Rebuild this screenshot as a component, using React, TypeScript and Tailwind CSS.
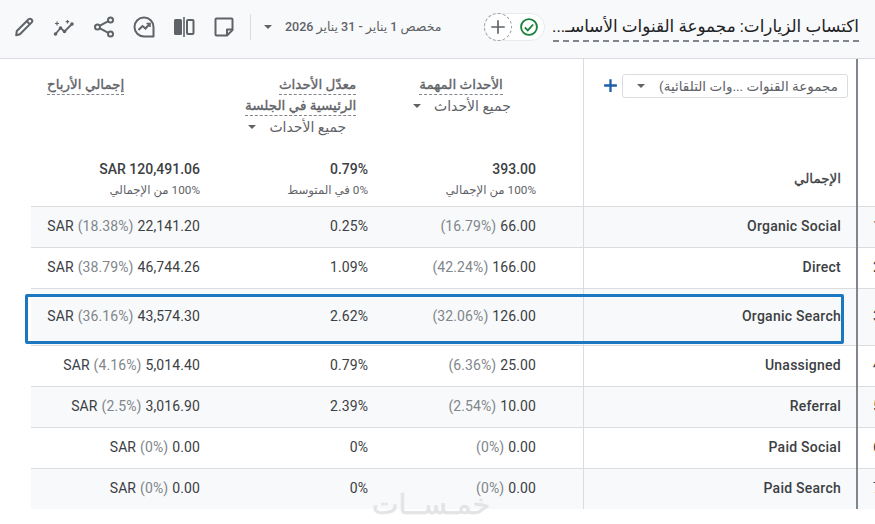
/**
 * Traffic acquisition report: toolbar and channel table.
 */

import type { ReactNode } from "react";

const GRID = "grid grid-cols-[31px_185px_168px_199px_273px_2px_17px]";

const rows = [
  { rank: "1", name: "Organic Social", events: "66.00", eventsPct: "(16.79%)", rate: "0.25%", revenue: "22,141.20", revenuePct: "(18.38%)", shaded: true, tall: false },
  { rank: "2", name: "Direct", events: "166.00", eventsPct: "(42.24%)", rate: "1.09%", revenue: "46,744.26", revenuePct: "(38.79%)", shaded: false, tall: false },
  { rank: "3", name: "Organic Search", events: "126.00", eventsPct: "(32.06%)", rate: "2.62%", revenue: "43,574.30", revenuePct: "(36.16%)", shaded: true, tall: true },
  { rank: "4", name: "Unassigned", events: "25.00", eventsPct: "(6.36%)", rate: "0.79%", revenue: "5,014.40", revenuePct: "(4.16%)", shaded: false, tall: false },
  { rank: "5", name: "Referral", events: "10.00", eventsPct: "(2.54%)", rate: "2.39%", revenue: "3,016.90", revenuePct: "(2.5%)", shaded: true, tall: false },
  { rank: "6", name: "Paid Social", events: "0.00", eventsPct: "(0%)", rate: "0%", revenue: "0.00", revenuePct: "(0%)", shaded: false, tall: false },
  { rank: "7", name: "Paid Search", events: "0.00", eventsPct: "(0%)", rate: "0%", revenue: "0.00", revenuePct: "(0%)", shaded: true, tall: false },
];

function ToolIcon({ children }: { children: ReactNode }) {
  return (
    <svg viewBox="0 0 24 24" className="size-6 shrink-0 text-[#5f6368]" fill="none" stroke="currentColor" strokeWidth="2">
      {children}
    </svg>
  );
}

function Caret({ className }: { className?: string }) {
  return <span className={`inline-block size-0 border-x-[4px] border-t-[4px] border-x-transparent border-t-[#5f6368] ${className ?? ""}`} />;
}

function Toolbar() {
  return (
    <header className="flex h-[59px] items-center border-b border-[#dadce0] bg-[#f8f9fa] pr-[16px] pl-[12px] pb-[4px]">
      <div className="flex items-center gap-[16px]">
        <ToolIcon>
          <path d="M4.200 20.200 4.800 16 16.600 4.300a2.200 2.200 0 0 1 3.100 3.100L7.900 19.300z" strokeLinejoin="round" />
          <path d="M14.800 6.200 17.800 9.200" />
        </ToolIcon>
        <ToolIcon>
          <path d="M3.500 19 8.500 13l4 3.500L20 9" strokeWidth="1.800" />
          <circle cx="3.500" cy="19" r="1.800" fill="currentColor" stroke="none" />
          <circle cx="8.500" cy="13" r="1.800" fill="currentColor" stroke="none" />
          <circle cx="12.500" cy="16.500" r="1.800" fill="currentColor" stroke="none" />
          <circle cx="20" cy="9" r="1.800" fill="currentColor" stroke="none" />
          <path d="M5 6.500v4M3 8.500h4M15.500 5v3.500M13.800 6.700h3.400" strokeWidth="1.200" />
        </ToolIcon>
        <ToolIcon>
          <circle cx="18.500" cy="5" r="2.500" />
          <circle cx="5.500" cy="12" r="2.500" />
          <circle cx="18.500" cy="19" r="2.500" />
          <path d="M8 10.700 16.300 6.200M8 13.300l8.300 4.500" />
        </ToolIcon>
        <ToolIcon>
          <path d="M21.500 21.500H12a9.500 9.500 0 1 1 9.500-9.500z" strokeLinejoin="round" />
          <path d="M6.500 15 10.500 11l3 2.500L17.500 9" />
          <path d="M14.500 8.500h3.500V12" strokeWidth="1.600" />
        </ToolIcon>
        <ToolIcon>
          <rect x="2" y="4" width="8" height="16" rx="1.500" fill="currentColor" stroke="none" />
          <path d="M12 2v20" strokeWidth="1.600" />
          <rect x="15" y="5" width="6.500" height="14" rx="1" />
        </ToolIcon>
        <ToolIcon>
          <path d="M3.500 4.500a1 1 0 0 1 1-1h15a1 1 0 0 1 1 1V15l-5.500 5.500H4.500a1 1 0 0 1-1-1z" strokeLinejoin="round" />
          <path d="M20.500 14.500H15v6" strokeLinejoin="round" />
        </ToolIcon>
      </div>
      <div className="mr-[13px] ml-[14px] h-[26px] w-px bg-[#dadce0]" />
      <Caret />
      <span dir="rtl" className="ml-[13px] text-[12.5px] font-medium whitespace-nowrap text-[#5f6368]">
        مخصص 1 يناير - 31 يناير 2026
      </span>
      <div className="ml-auto flex items-center">
        <div className="flex h-[28px] w-[61px] shrink-0 items-center justify-between rounded-full border border-[#e8eaed] bg-white pr-[5px]">
          <span className="-ml-px flex size-[28px] items-center justify-center rounded-full border border-dashed border-[#9aa0a6] text-[#5f6368]">
            <svg viewBox="0 0 24 24" className="size-[18px]" fill="none" stroke="currentColor" strokeWidth="2.200">
              <path d="M12 3v18M3 12h18" />
            </svg>
          </span>
          <svg viewBox="0 0 24 24" className="size-[20px] text-[#188038]" fill="none" stroke="currentColor" strokeWidth="2.200">
            <circle cx="12" cy="12" r="9.500" />
            <path d="m7 12.500 3.500 3.500L17 9" />
          </svg>
        </div>
        <h1 dir="rtl" className="ml-[8px] w-[306px] border-b-2 border-dashed border-[#80868b] text-[16.8px] leading-[27px] whitespace-nowrap text-[#202124]">
          اكتساب الزيارات: مجموعة القنوات الأساسـ...
        </h1>
      </div>
    </header>
  );
}

function HeaderTitle({ children }: { children: ReactNode }) {
  return (
    <span className="border-b border-dashed border-[#80868b] text-[13.500px] leading-[19px] font-medium whitespace-nowrap text-[#5f6368] [-webkit-text-stroke:0.35px_#5f6368]">
      {children}
    </span>
  );
}

function TotalCell({ value, note, className }: { value: string; note: string; className?: string }) {
  return (
    <div className={`flex flex-1 flex-col items-end justify-end pb-[7px] ${className ?? "pr-[16px]"}`}>
      <span className="text-[14px] leading-[20px] font-medium text-[#3c4043]">{value}</span>
      <span dir="rtl" className="mt-[2px] text-[11.750px] leading-[18px] text-[#5f6368]">
        {note}
      </span>
    </div>
  );
}

function ValueCell({ value, pct, unit }: { value: string; pct?: string; unit?: string }) {
  return (
    <div dir="ltr" className="flex items-center justify-end gap-[4px] pr-[16px] pb-[2px] text-[14px] tracking-[0.1px] whitespace-nowrap text-[#3c4043]">
      {unit && <span>{unit}</span>}
      {pct && <span className="text-[#80868b]">{pct}</span>}
      <span>{value}</span>
    </div>
  );
}

export default function App() {
  return (
    <div className="relative h-[524px] w-[875px] overflow-hidden bg-white font-['Roboto','Noto_Sans','DejaVu_Sans',sans-serif]">
      <Toolbar />

      <div className={`${GRID} h-[148px]`}>
        <div />
        <div className="flex flex-col border-b border-[#dadce0]">
          <div className="h-[94px] pt-[16px] pl-[16px]">
            <div dir="rtl" className="flex w-fit">
              <HeaderTitle>إجمالي الأرباح</HeaderTitle>
            </div>
          </div>
          <TotalCell value="SAR 120,491.06" note="100% من الإجمالي" />
        </div>
        <div className="flex flex-col border-b border-[#dadce0]">
          <div className="h-[94px] pt-[16px] pl-[29px]">
            <div dir="rtl" className="flex w-fit flex-col items-start gap-[1px]">
              <HeaderTitle>معدّل الأحداث</HeaderTitle>
              <HeaderTitle>الرئيسية في الجلسة</HeaderTitle>
              <div className="flex items-center gap-[13px] pr-[10px] text-[14px] leading-[20px] text-[#5f6368]">
                <span>جميع الأحداث</span>
                <Caret />
              </div>
            </div>
          </div>
          <TotalCell value="0.79%" note="0% في المتوسط" />
        </div>
        <div className="flex flex-col border-b border-[#dadce0]">
          <div className="h-[94px] pt-[16px] pl-[29px]">
            <div dir="rtl" className="flex w-fit flex-col items-start gap-[1px]">
              <HeaderTitle>الأحداث المهمة</HeaderTitle>
              <div className="-mr-[8px] flex items-center gap-[13px] text-[14px] leading-[20px] text-[#5f6368]">
                <span>جميع الأحداث</span>
                <Caret />
              </div>
            </div>
          </div>
          <TotalCell value="393.00" note="100% من الإجمالي" className="pr-[47px]" />
        </div>
        <div className="flex flex-col border-b border-l border-[#dadce0] pr-[15px]">
          <div className="flex h-[94px] items-start gap-[3px] pt-[15px] pl-[18px]">
            <svg viewBox="0 0 24 24" className="mt-[3px] size-[17px] shrink-0 text-[#1a5fa8]" fill="none" stroke="currentColor" strokeWidth="3.200">
              <path d="M12 3v18M3 12h18" />
            </svg>
            <div className="flex h-[24px] w-[226px] shrink-0 items-center justify-between rounded-[3px] border border-[#dadce0] bg-white pr-[9px] pl-[14px]">
              <Caret />
              <span dir="rtl" className="text-[13.500px] whitespace-nowrap text-[#5f6368]">
                مجموعة القنوات ...وات التلقائية)
              </span>
            </div>
          </div>
          <div dir="rtl" className="pt-[15px] text-[13.500px] leading-[20px] font-medium text-[#3c4043] [-webkit-text-stroke:0.3px_#3c4043]">
            الإجمالي
          </div>
        </div>
        <div className="bg-[#80868b]" />
        <div className="border-b border-[#dadce0]" />
      </div>

      {rows.map((row) => {
        const last = row.rank === "7";
        const line = last ? "" : "border-b border-[#dadce0]";
        const fill = row.shaded ? "bg-[#f8f9fa]" : "bg-white";
        return (
          <div key={row.rank} className={`${GRID} ${row.tall ? "h-[57px]" : last ? "h-[40px]" : "h-[41px]"}`}>
            <div />
            <div className={`col-span-3 grid grid-cols-[185px_168px_199px] ${line} ${fill}`}>
              <ValueCell value={row.revenue} pct={row.revenuePct} unit="SAR" />
              <ValueCell value={row.rate} />
              <div className="flex items-center justify-end pr-[31px]">
                <ValueCell value={row.events} pct={row.eventsPct} />
              </div>
            </div>
            <div className={`flex items-center justify-end border-l border-[#dadce0] pr-[15px] pb-[2px] text-[14px] font-medium tracking-[0.25px] text-[#3c4043] ${line} ${fill}`}>
              {row.name}
            </div>
            <div className="bg-[#80868b]" />
            <div className={`flex items-center pb-[2px] pl-[15px] text-[14px] text-[#3c4043] ${line} ${fill}`}>{row.rank}</div>
          </div>
        );
      })}

      {/* annotation drawn over the Organic Search row */}
      <div className="absolute top-[294px] left-[25px] h-[50px] w-[819px] rounded-[2px] border-[3px] border-[#1a77c0]" />

      {/* watermark */}
      <span dir="rtl" className="absolute top-[495px] left-[385px] w-[105px] text-center text-[28px] leading-[20px] whitespace-nowrap text-[#e3e4e6] [-webkit-text-stroke:0.5px_#e3e4e6]">
        خمـســات
      </span>
    </div>
  );
}
